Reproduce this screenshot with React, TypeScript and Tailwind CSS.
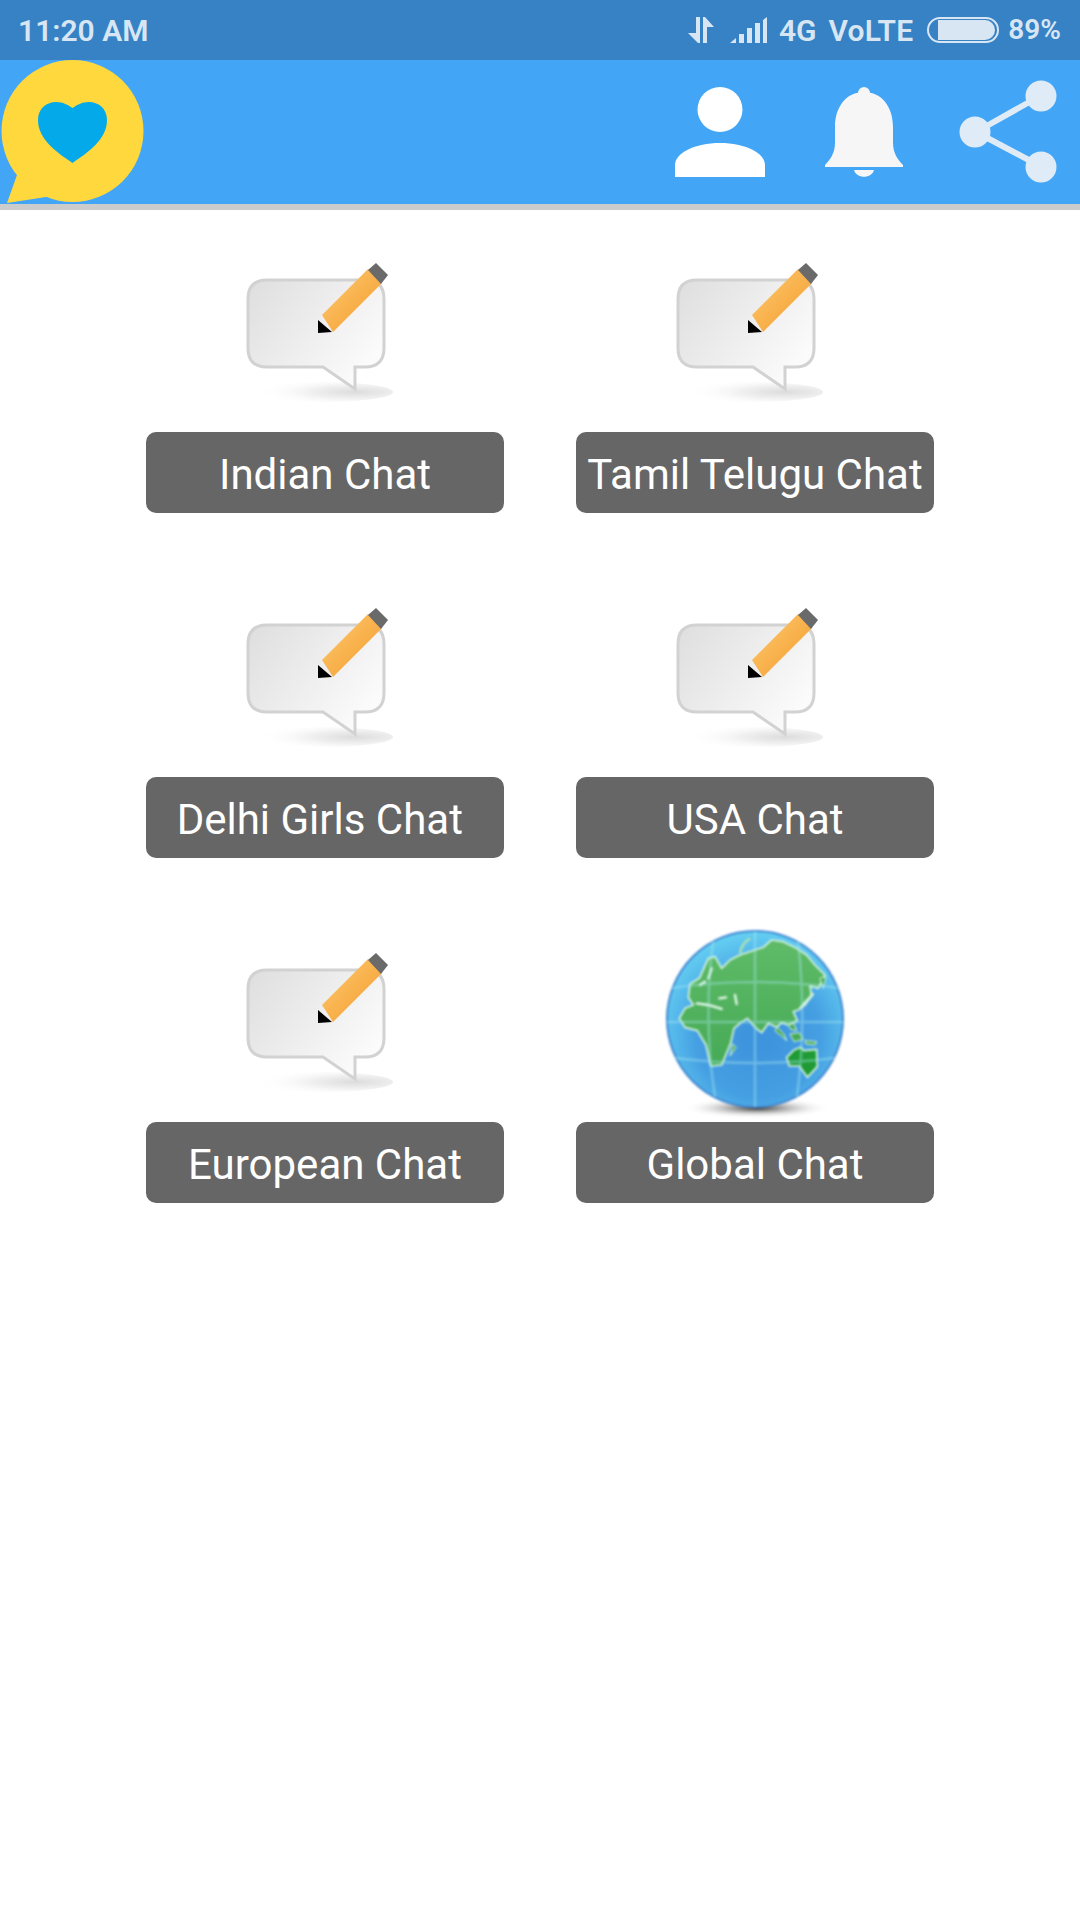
const rooms = ['Indian Chat', 'Tamil Telugu Chat', 'Delhi Girls Chat\u00a0', 'USA Chat', 'European Chat', 'Global Chat']

function ChatIcon() {
  return (
    <svg width="180" height="192" viewBox="0 0 180 192" className="blur-[0.7px]">
      <defs>
        <linearGradient id="bubble" x1="0" y1="0" x2="1" y2="0.6">
          <stop offset="0" stopColor="#dedede" />
          <stop offset="1" stopColor="#fbfbfb" />
        </linearGradient>
        <linearGradient id="pencil" x1="0" y1="0" x2="1" y2="1">
          <stop offset="0" stopColor="#fecb72" />
          <stop offset="1" stopColor="#f39a2a" />
        </linearGradient>
        <radialGradient id="shade" cx="0.72" cy="0.5" r="0.72">
          <stop offset="0" stopColor="#dcdcdc" />
          <stop offset="0.45" stopColor="#f0f0f0" />
          <stop offset="1" stopColor="#ffffff" stopOpacity="0" />
        </radialGradient>
      </defs>
      <ellipse cx="90" cy="152" rx="68" ry="10" fill="url(#shade)" />
      <path
        d="M32 40H130Q149 40 149 59V108Q149 127 130 127H120V149L88 127H32Q13 127 13 108V59Q13 40 32 40Z"
        fill="url(#bubble)"
        stroke="#d2d2d2"
        strokeWidth="3"
      />
      <path d="M87 75L133 29L147 43L98 92Z" fill="url(#pencil)" />
      <path d="M133 30L141 23L153 35L146 44Z" fill="#6a6a6a" />
      <path d="M83 80L97 92L83 93Z" fill="#000000" />
    </svg>
  )
}

function GlobeIcon() {
  return (
    <svg width="180" height="192" viewBox="0 0 180 192" className="blur-[1px]">
      <defs>
        <radialGradient id="sea" cx="0.52" cy="0.6" r="0.64">
          <stop offset="0" stopColor="#3d92dc" />
          <stop offset="0.55" stopColor="#459fe2" />
          <stop offset="1" stopColor="#6ad8f5" />
        </radialGradient>
        <radialGradient id="ground">
          <stop offset="0" stopColor="#2e2e2e" />
          <stop offset="1" stopColor="#ffffff" stopOpacity="0" />
        </radialGradient>
        <linearGradient id="land" x1="0" y1="0" x2="0" y2="1">
          <stop offset="0" stopColor="#5fbb68" />
          <stop offset="1" stopColor="#46aa56" />
        </linearGradient>
      </defs>
      <ellipse cx="92" cy="178" rx="74" ry="10" fill="url(#ground)" />
      <circle cx="90" cy="89" r="88" fill="url(#sea)" stroke="#4088d2" strokeWidth="2" />
      <g transform="translate(-25 -20) scale(0.3333)" strokeLinejoin="round">
        <path
          d="M118 325L135 295L160 285L145 262L150 222L178 205L205 145L225 140L245 175L270 150L300 135L345 120L370 112L395 90L430 95L470 115L500 135L525 165L555 195L535 235L510 228L515 258L495 285L475 300L460 305L472 332L445 345L425 338L410 352L385 340L365 368L345 352L322 325L300 340L282 355L272 400L245 465L212 468L198 405L172 362L135 352Z"
          fill="url(#land)"
          stroke="#d8f5df"
          strokeWidth="5"
        />
        <path
          d="M440 442L462 420L482 412L492 422L530 418L532 470L502 502L478 468L448 468Z"
          fill="#1f9a35"
          stroke="#d8f5df"
          strokeWidth="5"
        />
        <path d="M405 362L425 378L440 392L432 372L412 352Z" fill="#46aa56" stroke="#d8f5df" strokeWidth="3" />
        <path d="M450 372L478 368L490 388L462 395Z" fill="#46aa56" stroke="#d8f5df" strokeWidth="3" />
        <path d="M495 392L530 395L525 405L498 402Z" fill="#46aa56" stroke="#d8f5df" strokeWidth="3" />
        <path d="M445 345L462 340L470 362L452 358Z" fill="#46aa56" stroke="#d8f5df" strokeWidth="3" />
        <path d="M300 130Q305 100 330 85" fill="none" stroke="#a8e0b8" strokeWidth="8" />
        <path d="M480 295L510 262L520 250" fill="none" stroke="#d8f5df" strokeWidth="8" />
        <path d="M540 205L558 200L550 235Z" fill="#46aa56" stroke="#d8f5df" strokeWidth="3" />
        <path d="M170 280L205 285L245 297M238 265L258 262M285 255L290 282M215 175L205 205M180 225L195 215" fill="none" stroke="#e8f8ec" strokeWidth="7" strokeLinecap="round" />
        <path d="M278 402L288 412L270 438Z" fill="#46aa56" stroke="#d8f5df" strokeWidth="3" />
      </g>
      <path
        d="M90 1V177M48 11Q38 90 50 167M133 11Q142 90 132 167M6 58Q90 46 174 58M2 92H178M10 128Q90 138 170 128"
        fill="none"
        stroke="#a9ecf2"
        strokeWidth="2.5"
        opacity="0.4"
      />
    </svg>
  )
}

function Logo() {
  return (
    <svg width="146" height="144" viewBox="0 0 146 144" className="shrink-0">
      <circle cx="72.5" cy="71" r="71" fill="#ffd83d" />
      <path d="M17 115L7 143L46 137L60 110Z" fill="#ffd83d" />
      <path
        d="M72.5 103C58 93 38 80 38 60C38 48 47 42 56 42C63 42 68 45 72.5 48C77 45 82 42 89 42C98 42 107 48 107 60C107 80 87 93 72.5 103Z"
        fill="#03a9e8"
      />
    </svg>
  )
}

function StatusBar() {
  return (
    <div className="h-[60px] bg-[#3682c5] flex items-center pl-[18px] pr-[19px] text-[#d8e6f4] text-[30px] font-semibold">
      <span>11:20 AM</span>
      <div className="ml-auto flex items-center">
        <svg width="28" height="28" viewBox="0 0 28 28" fill="#d8e6f4">
          <path d="M9 1H13V27H11L1 17H9Z" />
          <path d="M16 27V1H18L27 11H20V27Z" />
        </svg>
        <svg width="38" height="26" viewBox="0 0 38 26" fill="#d8e6f4" className="ml-[15px]">
          <path d="M0 26L6 21V26Z" />
          <rect x="9" y="17" width="5" height="9" />
          <rect x="17" y="11" width="5" height="15" />
          <rect x="25" y="6" width="5" height="20" />
          <path d="M33 3L37 0V26H33Z" />
        </svg>
        <span className="ml-[11px]">4G</span>
        <span className="ml-[12px] tracking-[0.2px]">VoLTE</span>
        <div className="ml-[14px] w-[72px] h-[26px] rounded-full border-2 border-[#d8e6f4] flex items-center pl-[9px] pr-[2px]">
          <div className="h-[20px] w-full rounded-r-full bg-[#d8e6f4]" />
        </div>
        <span className="ml-[9px] text-[28px]">89%</span>
      </div>
    </div>
  )
}

function AppBar() {
  return (
    <div className="h-[150px] bg-[#42a5f5] border-b-[6px] border-[#cccccc] flex">
      <Logo />
      <div className="ml-auto flex items-start">
        <svg width="90" height="90" viewBox="0 0 90 90" fill="#ffffff" className="mt-[27px] blur-[0.5px]">
          <circle cx="45" cy="22.5" r="22.5" />
          <path d="M0 90V78C0 66 20 56 45 56C70 56 90 66 90 78V90Z" />
        </svg>
        <svg width="80" height="92" viewBox="0 0 80 92" fill="#f6f6f6" className="mt-[27px] ml-[59px] blur-[0.5px]">
          <circle cx="40" cy="6" r="6" />
          <path d="M40 5C22 5 11 20 11 40V56C11 66 6 73 1 78V80H79V78C74 73 69 66 69 56V40C69 20 58 5 40 5Z" />
          <path d="M30 83H50C48 92 32 92 30 83Z" />
        </svg>
        <svg width="100" height="104" viewBox="0 0 100 104" className="mt-[20px] ml-[54px] mr-[22px] blur-[0.5px]">
          <path d="M18 52L82 16M18 52L82 86" stroke="#dfebf7" strokeWidth="6" fill="none" />
          <g fill="#dfebf7">
            <circle cx="83" cy="16" r="15.5" />
            <circle cx="17" cy="52" r="15.5" />
            <circle cx="83" cy="87" r="15.5" />
          </g>
        </svg>
      </div>
    </div>
  )
}

export default function App() {
  return (
    <div className="min-h-[1920px] bg-white" style={{ fontFamily: 'Roboto, sans-serif' }}>
      <StatusBar />
      <AppBar />
      <main className="pt-[30px] grid grid-cols-[358px_358px] justify-center gap-[72px]">
        {rooms.map(name => (
          <div key={name} className="flex flex-col items-center">
            {name === 'Global Chat' ? <GlobeIcon /> : <ChatIcon />}
            <button className="w-full h-[81px] pt-[4px] rounded-[10px] bg-[#666666] text-white text-[42px] whitespace-nowrap">
              {name}
            </button>
          </div>
        ))}
      </main>
    </div>
  )
}
